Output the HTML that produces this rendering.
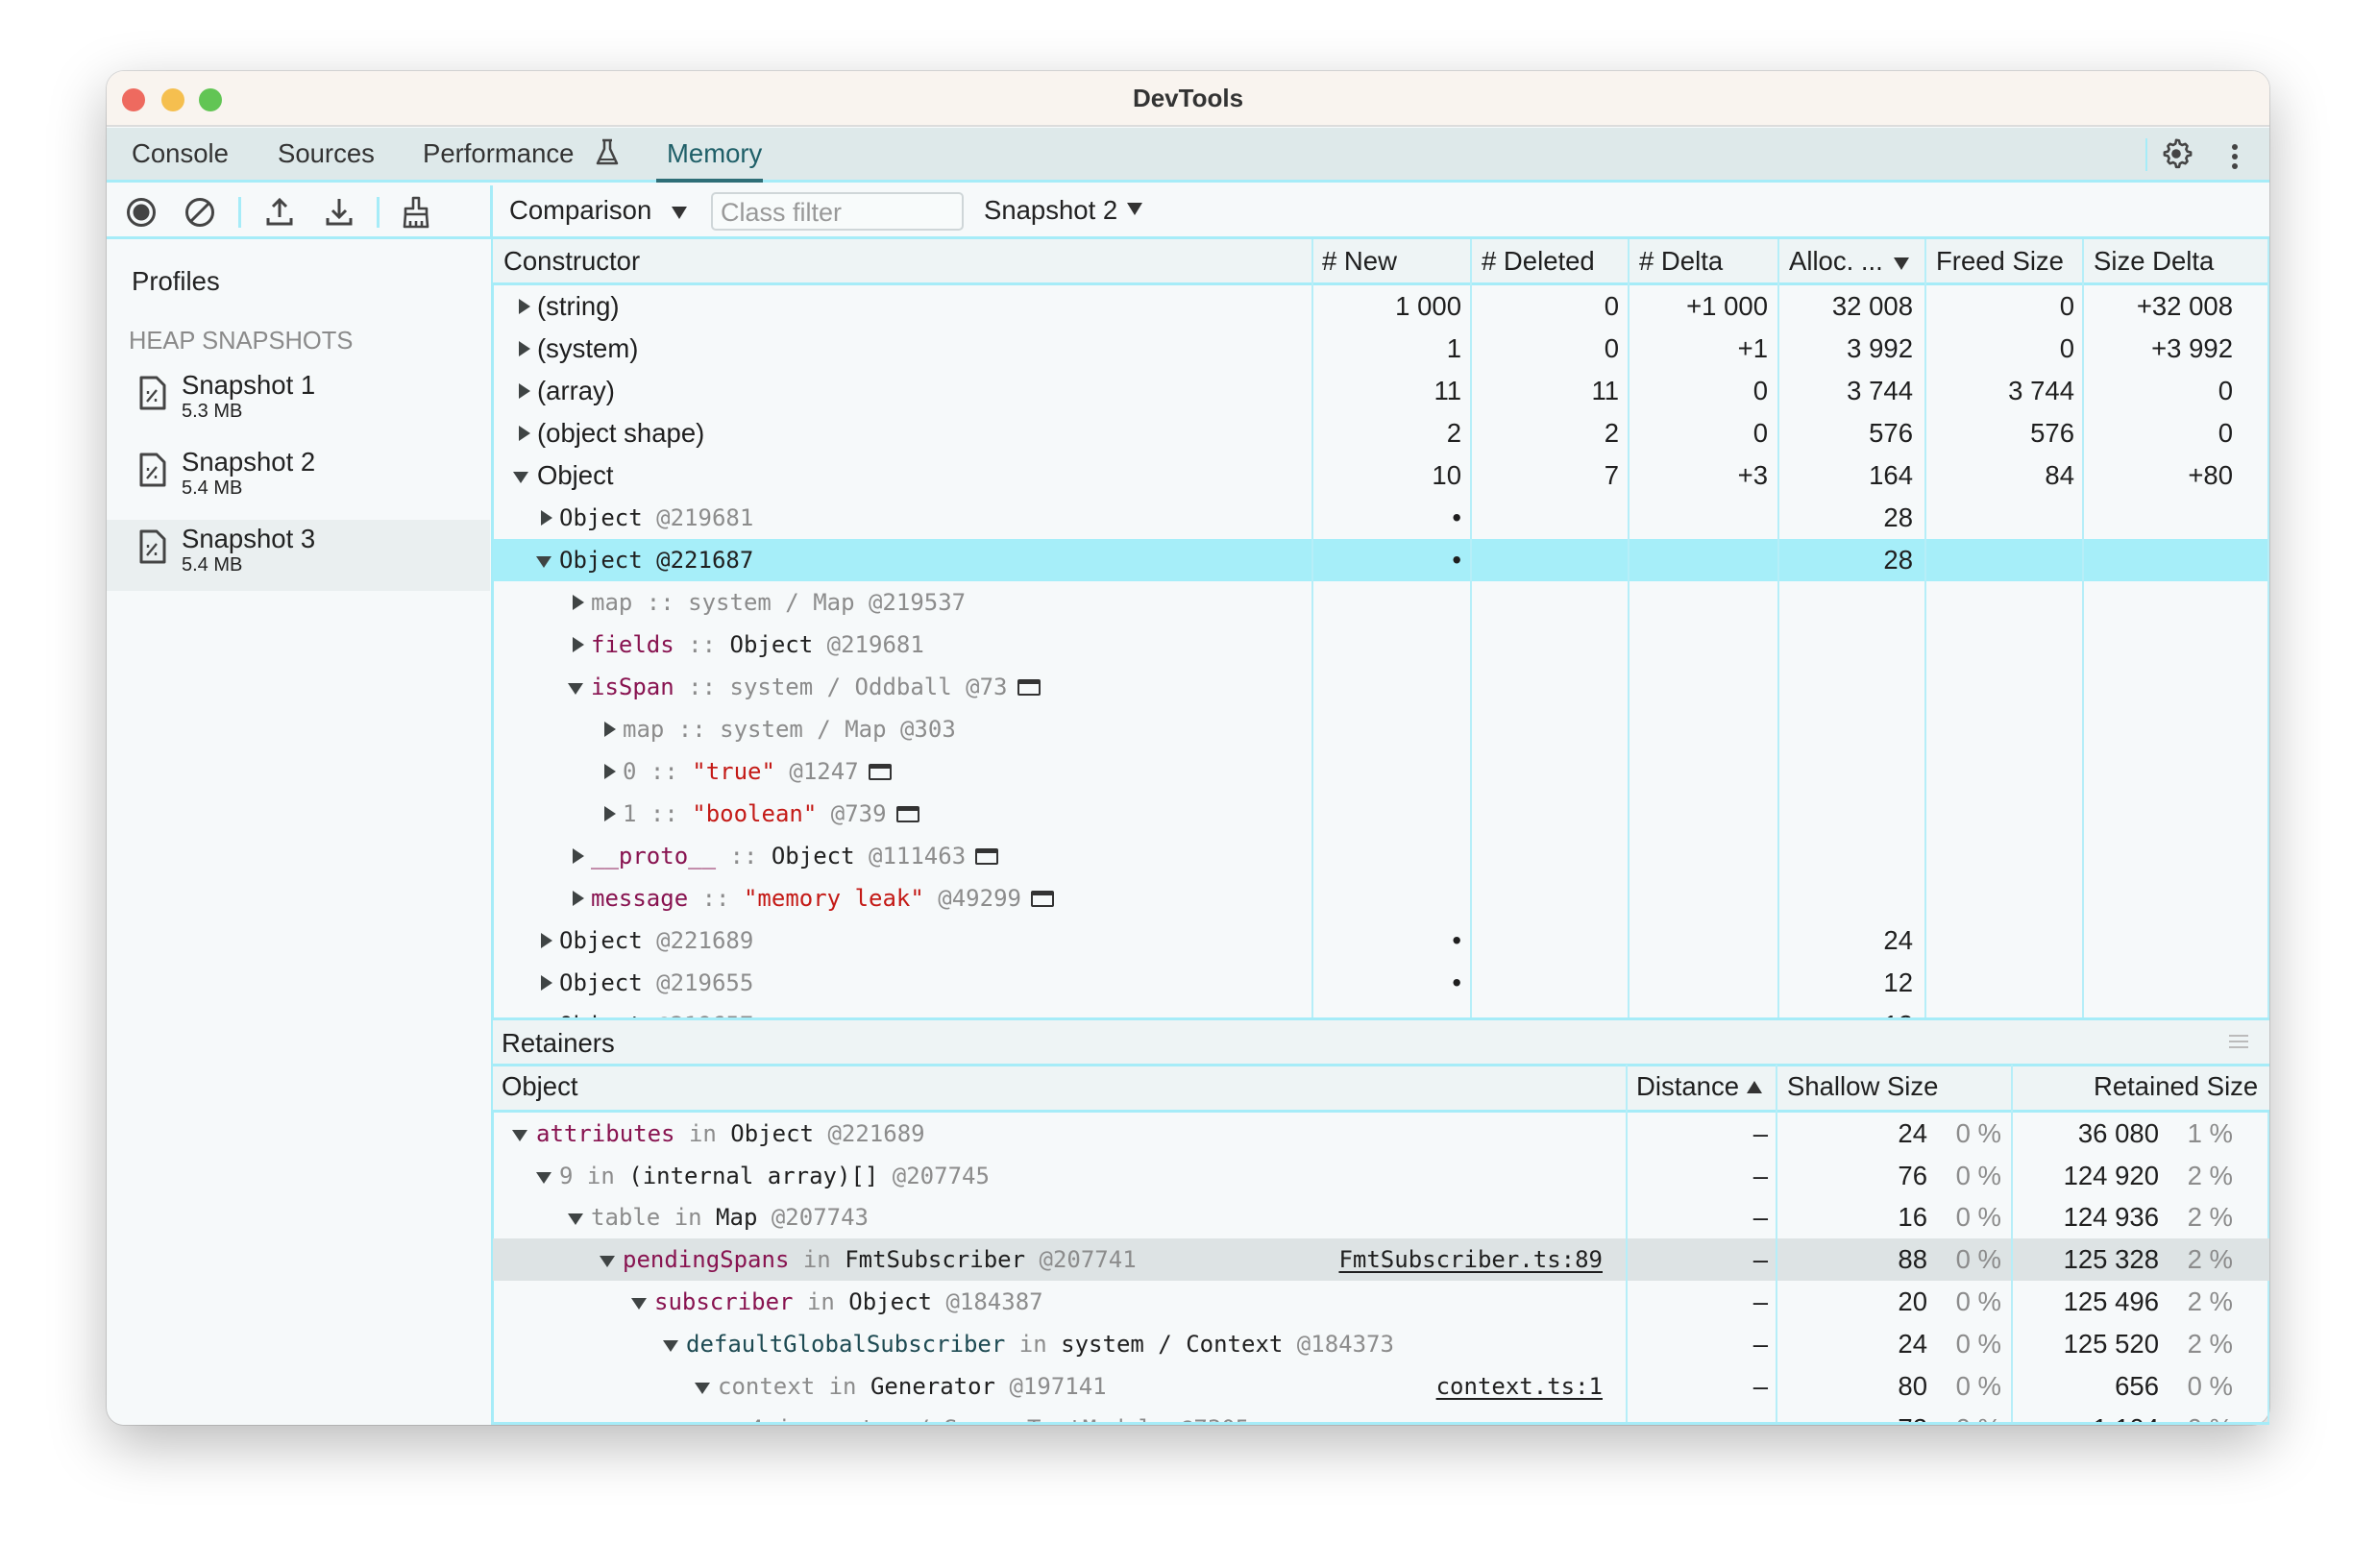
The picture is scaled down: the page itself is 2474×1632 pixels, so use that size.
<!DOCTYPE html>
<html><head><meta charset="utf-8"><style>
*{box-sizing:border-box;margin:0;padding:0}
body{width:2474px;height:1632px;background:#fff;position:relative;overflow:hidden;font-family:"Liberation Sans",sans-serif;color:#1f1f1f;font-size:27.5px}
.a{position:absolute}
#win{left:111px;top:74px;width:2251px;height:1409px;border-radius:18px;overflow:hidden;background:#f6f9fa;box-shadow:0 20px 60px rgba(0,0,0,.28),0 0 0 1px rgba(0,0,0,.12)}
.m{font-family:"DejaVu Sans Mono","Liberation Mono",monospace;font-size:24px}
.g{color:#8c8c8c}.p{color:#881350}.s{color:#c41a16}.t{color:#1d4a52}
.row{position:absolute;left:0;width:1849px;height:44px;line-height:44px;white-space:nowrap}
.n{position:absolute;top:0}
.tri{position:absolute;width:0;height:0}
.tr{border-top:8px solid transparent;border-bottom:8px solid transparent;border-left:12px solid #3f4444;top:14px}
.td{border-left:8px solid transparent;border-right:8px solid transparent;border-top:12px solid #3f4444;top:18px}
.box{display:inline-block;width:24px;height:17px;border:2.5px solid #333;border-top-width:5px;border-radius:2px;vertical-align:-1px;margin-left:10px}
.vl{position:absolute;width:2px;background:#b6eef8}
.hl{position:absolute;height:3px;background:#a6ecf8}
u{text-decoration:underline;text-underline-offset:4px}
</style></head><body>
<div id="win" class="a">
 <div class="a" style="left:0;top:0;width:2251px;height:58px;background:#f9f4ef;border-bottom:2px solid #dcdcdc"></div>
 <div class="a" style="left:16px;top:18px;width:24px;height:24px;border-radius:50%;background:#ee6a5f"></div>
 <div class="a" style="left:57px;top:18px;width:24px;height:24px;border-radius:50%;background:#f5bf4f"></div>
 <div class="a" style="left:96px;top:18px;width:24px;height:24px;border-radius:50%;background:#62c554"></div>
 <div class="a" style="left:0;top:13px;width:2251px;text-align:center;font-weight:bold;font-size:26px;color:#333">DevTools</div>
 <div class="a" style="left:0;top:59px;width:2251px;height:57px;background:#dee9ea;border-bottom:3px solid #a6ecf8"></div>
 <div class="a" style="left:26px;top:70px;color:#333">Console</div>
 <div class="a" style="left:178px;top:70px;color:#333">Sources</div>
 <div class="a" style="left:329px;top:70px;color:#333">Performance</div>
 <svg class="a" style="left:508px;top:70px" width="26" height="30" viewBox="0 0 26 30"><path d="M8 2h10M10 2v9L3 26h20L16 11V2" fill="none" stroke="#444" stroke-width="2.5" stroke-linejoin="round"/><path d="M5 22h16" stroke="#444" stroke-width="2"/></svg>
 <div class="a" style="left:583px;top:70px;color:#1f5f68">Memory</div>
 <div class="a" style="left:572px;top:112px;width:111px;height:4px;background:#2e6e77"></div>
 <div class="a" style="left:2122px;top:70px;width:2px;height:34px;background:#a6ecf8"></div>
 <svg class="a" style="left:2136px;top:68px" width="36" height="36" viewBox="0 0 24 24"><path d="M12 2.5l2 .3.5 2.3 1.6.9 2.2-.8 1.4 1.5-.8 2.2.9 1.6 2.3.5v2l-2.3.5-.9 1.6.8 2.2-1.4 1.5-2.2-.8-1.6.9-.5 2.3h-2l-.5-2.3-1.6-.9-2.2.8-1.4-1.5.8-2.2-.9-1.6-2.3-.5v-2l2.3-.5.9-1.6-.8-2.2 1.4-1.5 2.2.8 1.6-.9.5-2.3z" fill="none" stroke="#444" stroke-width="1.7" stroke-linejoin="round"/><circle cx="12" cy="12" r="3.2" fill="#444"/></svg>
 <div class="a" style="left:2212px;top:76px;width:6px;height:6px;border-radius:50%;background:#444;box-shadow:0 10px 0 #444,0 20px 0 #444"></div>
 <div class="a" style="left:0;top:119px;width:2251px;height:56px;border-bottom:3px solid #a6ecf8"></div>
 <div class="a" style="left:399px;top:119px;width:3px;height:56px;background:#a6ecf8"></div>
 <svg class="a" style="left:20px;top:131px" width="32" height="32"><circle cx="16" cy="16" r="13.5" fill="none" stroke="#444" stroke-width="3"/><circle cx="16" cy="16" r="8.5" fill="#444"/></svg>
 <svg class="a" style="left:81px;top:131px" width="32" height="32"><circle cx="16" cy="16" r="13.5" fill="none" stroke="#444" stroke-width="3"/><path d="M7 25L25 7" stroke="#444" stroke-width="3"/></svg>
 <div class="a" style="left:137px;top:131px;width:3px;height:32px;background:#a6ecf8"></div>
 <svg class="a" style="left:165px;top:131px" width="30" height="32"><path d="M15 3v18M8 10l7-7 7 7M3 22v6h24v-6" fill="none" stroke="#444" stroke-width="3"/></svg>
 <svg class="a" style="left:227px;top:131px" width="30" height="32"><path d="M15 2v19M8 14l7 7 7-7M3 22v6h24v-6" fill="none" stroke="#444" stroke-width="3"/></svg>
 <div class="a" style="left:281px;top:131px;width:3px;height:32px;background:#a6ecf8"></div>
 <svg class="a" style="left:306px;top:129px" width="32" height="36"><path d="M13 3h6v11h8v6H5v-6h8z M5 20l-1 13h24l-1-13 M10 27v6M16 27v6M22 27v6" fill="none" stroke="#444" stroke-width="2.6" stroke-linejoin="round"/></svg>
 <div class="a" style="left:419px;top:129px;color:#222">Comparison</div>
 <div class="a" style="left:588px;top:141px;border-left:8px solid transparent;border-right:8px solid transparent;border-top:13px solid #333"></div>
 <div class="a" style="left:629px;top:126px;width:263px;height:40px;border:2px solid #cfd6d8;border-radius:5px;background:#f8fbfb;color:#999;padding:4px 8px;font-size:27px;line-height:30px">Class filter</div>
 <div class="a" style="left:913px;top:129px;color:#222">Snapshot 2</div>
 <div class="a" style="left:1062px;top:137px;border-left:8px solid transparent;border-right:8px solid transparent;border-top:13px solid #333"></div>
 <div class="a" style="left:26px;top:203px;color:#222">Profiles</div>
 <div class="a" style="left:23px;top:267px;color:#8a8a8a;font-size:25.5px">HEAP SNAPSHOTS</div>
 <div class="a" style="left:0;top:467px;width:399px;height:74px;background:#eaeff0"></div>
 <svg class="a" style="left:33px;top:316px" width="30" height="38"><path d="M3 3h16l8 8v24H3z" fill="none" stroke="#444" stroke-width="3" stroke-linejoin="round"/><path d="M9 28l10-12M10 17v3M18 25v3" stroke="#444" stroke-width="2.4"/></svg>
 <div class="a" style="left:78px;top:311px;color:#222">Snapshot 1</div>
 <div class="a" style="left:78px;top:343px;color:#222;font-size:20px">5.3 MB</div>
 <svg class="a" style="left:33px;top:396px" width="30" height="38"><path d="M3 3h16l8 8v24H3z" fill="none" stroke="#444" stroke-width="3" stroke-linejoin="round"/><path d="M9 28l10-12M10 17v3M18 25v3" stroke="#444" stroke-width="2.4"/></svg>
 <div class="a" style="left:78px;top:391px;color:#222">Snapshot 2</div>
 <div class="a" style="left:78px;top:423px;color:#222;font-size:20px">5.4 MB</div>
 <svg class="a" style="left:33px;top:476px" width="30" height="38"><path d="M3 3h16l8 8v24H3z" fill="none" stroke="#444" stroke-width="3" stroke-linejoin="round"/><path d="M9 28l10-12M10 17v3M18 25v3" stroke="#444" stroke-width="2.4"/></svg>
 <div class="a" style="left:78px;top:471px;color:#222">Snapshot 3</div>
 <div class="a" style="left:78px;top:503px;color:#222;font-size:20px">5.4 MB</div>
 <div class="a" style="left:400px;top:175px;width:3px;height:1234px;background:#a6ecf8"></div>
</div>

<div class="a" style="left:513px;top:249px;width:1849px;height:48px;background:#eef4f5;border-bottom:3px solid #a6ecf8"></div>
<div class="a" style="left:524px;top:256px">Constructor</div>
<div class="a" style="left:1376px;top:256px"># New</div>
<div class="a" style="left:1542px;top:256px"># Deleted</div>
<div class="a" style="left:1706px;top:256px"># Delta</div>
<div class="a" style="left:1862px;top:256px">Alloc. ...</div>
<div class="a" style="left:1971px;top:268px;border-left:8px solid transparent;border-right:8px solid transparent;border-top:13px solid #333"></div>
<div class="a" style="left:2015px;top:256px">Freed Size</div>
<div class="a" style="left:2179px;top:256px">Size Delta</div>

<div class="a" style="left:513px;top:297px;width:1849px;height:763px;overflow:hidden">
 <div class="row" style="top:264px;background:#a6eef9"></div>
 <div class="row" style="top:0"><div class="tri tr" style="left:27px"></div><span class="n" style="left:46px">(string)</span><span class="n" style="right:841px">1 000</span><span class="n" style="right:677px">0</span><span class="n" style="right:522px">+1 000</span><span class="n" style="right:371px">32 008</span><span class="n" style="right:203px">0</span><span class="n" style="right:38px">+32 008</span></div>
 <div class="row" style="top:44px"><div class="tri tr" style="left:27px"></div><span class="n" style="left:46px">(system)</span><span class="n" style="right:841px">1</span><span class="n" style="right:677px">0</span><span class="n" style="right:522px">+1</span><span class="n" style="right:371px">3 992</span><span class="n" style="right:203px">0</span><span class="n" style="right:38px">+3 992</span></div>
 <div class="row" style="top:88px"><div class="tri tr" style="left:27px"></div><span class="n" style="left:46px">(array)</span><span class="n" style="right:841px">11</span><span class="n" style="right:677px">11</span><span class="n" style="right:522px">0</span><span class="n" style="right:371px">3 744</span><span class="n" style="right:203px">3 744</span><span class="n" style="right:38px">0</span></div>
 <div class="row" style="top:132px"><div class="tri tr" style="left:27px"></div><span class="n" style="left:46px">(object shape)</span><span class="n" style="right:841px">2</span><span class="n" style="right:677px">2</span><span class="n" style="right:522px">0</span><span class="n" style="right:371px">576</span><span class="n" style="right:203px">576</span><span class="n" style="right:38px">0</span></div>
 <div class="row" style="top:176px"><div class="tri td" style="left:21px"></div><span class="n" style="left:46px">Object</span><span class="n" style="right:841px">10</span><span class="n" style="right:677px">7</span><span class="n" style="right:522px">+3</span><span class="n" style="right:371px">164</span><span class="n" style="right:203px">84</span><span class="n" style="right:38px">+80</span></div>
 <div class="row" style="top:220px"><div class="tri tr" style="left:50px"></div><span class="n m" style="left:69px">Object <span class="g">@219681</span></span><span class="n" style="right:841px">•</span><span class="n" style="right:371px">28</span></div>
 <div class="row" style="top:264px"><div class="tri td" style="left:45px"></div><span class="n m" style="left:69px">Object @221687</span><span class="n" style="right:841px">•</span><span class="n" style="right:371px">28</span></div>
 <div class="row" style="top:308px"><div class="tri tr" style="left:83px"></div><span class="n m g" style="left:102px">map :: system / Map @219537</span></div>
 <div class="row" style="top:352px"><div class="tri tr" style="left:83px"></div><span class="n m" style="left:102px"><span class="p">fields</span> <span class="g">::</span> Object <span class="g">@219681</span></span></div>
 <div class="row" style="top:396px"><div class="tri td" style="left:78px"></div><span class="n m" style="left:102px"><span class="p">isSpan</span> <span class="g">:: system / Oddball @73</span><span class="box"></span></span></div>
 <div class="row" style="top:440px"><div class="tri tr" style="left:116px"></div><span class="n m g" style="left:135px">map :: system / Map @303</span></div>
 <div class="row" style="top:484px"><div class="tri tr" style="left:116px"></div><span class="n m" style="left:135px"><span class="g">0 ::</span> <span class="s">"true"</span> <span class="g">@1247</span><span class="box"></span></span></div>
 <div class="row" style="top:528px"><div class="tri tr" style="left:116px"></div><span class="n m" style="left:135px"><span class="g">1 ::</span> <span class="s">"boolean"</span> <span class="g">@739</span><span class="box"></span></span></div>
 <div class="row" style="top:572px"><div class="tri tr" style="left:83px"></div><span class="n m" style="left:102px"><span class="p">__proto__</span> <span class="g">::</span> Object <span class="g">@111463</span><span class="box"></span></span></div>
 <div class="row" style="top:616px"><div class="tri tr" style="left:83px"></div><span class="n m" style="left:102px"><span class="p">message</span> <span class="g">::</span> <span class="s">"memory leak"</span> <span class="g">@49299</span><span class="box"></span></span></div>
 <div class="row" style="top:660px"><div class="tri tr" style="left:50px"></div><span class="n m" style="left:69px">Object <span class="g">@221689</span></span><span class="n" style="right:841px">•</span><span class="n" style="right:371px">24</span></div>
 <div class="row" style="top:704px"><div class="tri tr" style="left:50px"></div><span class="n m" style="left:69px">Object <span class="g">@219655</span></span><span class="n" style="right:841px">•</span><span class="n" style="right:371px">12</span></div>
 <div class="row" style="top:748px"><div class="tri tr" style="left:50px"></div><span class="n m" style="left:69px">Object <span class="g">@219657</span></span><span class="n" style="right:371px">12</span></div>
</div>
<div class="vl" style="left:1365px;top:249px;height:811px"></div>
<div class="vl" style="left:1530px;top:249px;height:811px"></div>
<div class="vl" style="left:1694px;top:249px;height:811px"></div>
<div class="vl" style="left:1850px;top:249px;height:811px"></div>
<div class="vl" style="left:2003px;top:249px;height:811px"></div>
<div class="vl" style="left:2167px;top:249px;height:811px"></div>
<div class="vl" style="left:2360px;top:249px;height:1234px;width:2px"></div>

<div class="a" style="left:513px;top:1059px;width:1849px;height:98px;background:#eef4f5;border-top:3px solid #a6ecf8"></div>
<div class="hl" style="left:513px;top:1107px;width:1849px"></div>
<div class="hl" style="left:513px;top:1155px;width:1849px"></div>
<div class="a" style="left:522px;top:1070px">Retainers</div>
<div class="a" style="left:2320px;top:1077px;width:20px;height:2px;background:#bbb;box-shadow:0 6px 0 #bbb,0 12px 0 #bbb"></div>
<div class="a" style="left:522px;top:1115px">Object</div>
<div class="a" style="left:1703px;top:1115px">Distance</div>
<div class="a" style="left:1818px;top:1125px;border-left:8px solid transparent;border-right:8px solid transparent;border-bottom:13px solid #333"></div>
<div class="a" style="left:1860px;top:1115px">Shallow Size</div>
<div class="a" style="left:2179px;top:1115px">Retained Size</div>

<div class="a" style="left:513px;top:1158px;width:1849px;height:325px;overflow:hidden">
 <div class="row" style="top:131px;background:#dde3e4"></div>
 <div class="row" style="top:0"><div class="tri td" style="left:20px"></div><span class="n m" style="left:45px"><span class="p">attributes</span> <span class="g">in</span> Object <span class="g">@221689</span></span><span class="n" style="right:522px">–</span><span class="n" style="right:356px">24</span><span class="n g" style="right:279px">0 %</span><span class="n" style="right:115px">36 080</span><span class="n g" style="right:38px">1 %</span></div>
 <div class="row" style="top:44px"><div class="tri td" style="left:45px"></div><span class="n m" style="left:69px"><span class="g">9 in</span> (internal array)[] <span class="g">@207745</span></span><span class="n" style="right:522px">–</span><span class="n" style="right:356px">76</span><span class="n g" style="right:279px">0 %</span><span class="n" style="right:115px">124 920</span><span class="n g" style="right:38px">2 %</span></div>
 <div class="row" style="top:87px"><div class="tri td" style="left:78px"></div><span class="n m" style="left:102px"><span class="g">table in</span> Map <span class="g">@207743</span></span><span class="n" style="right:522px">–</span><span class="n" style="right:356px">16</span><span class="n g" style="right:279px">0 %</span><span class="n" style="right:115px">124 936</span><span class="n g" style="right:38px">2 %</span></div>
 <div class="row" style="top:131px"><div class="tri td" style="left:111px"></div><span class="n m" style="left:135px"><span class="p">pendingSpans</span> <span class="g">in</span> FmtSubscriber <span class="g">@207741</span></span><span class="n m" style="right:694px"><u>FmtSubscriber.ts:89</u></span><span class="n" style="right:522px">–</span><span class="n" style="right:356px">88</span><span class="n g" style="right:279px">0 %</span><span class="n" style="right:115px">125 328</span><span class="n g" style="right:38px">2 %</span></div>
 <div class="row" style="top:175px"><div class="tri td" style="left:144px"></div><span class="n m" style="left:168px"><span class="p">subscriber</span> <span class="g">in</span> Object <span class="g">@184387</span></span><span class="n" style="right:522px">–</span><span class="n" style="right:356px">20</span><span class="n g" style="right:279px">0 %</span><span class="n" style="right:115px">125 496</span><span class="n g" style="right:38px">2 %</span></div>
 <div class="row" style="top:219px"><div class="tri td" style="left:177px"></div><span class="n m" style="left:201px"><span class="t">defaultGlobalSubscriber</span> <span class="g">in</span> system / Context <span class="g">@184373</span></span><span class="n" style="right:522px">–</span><span class="n" style="right:356px">24</span><span class="n g" style="right:279px">0 %</span><span class="n" style="right:115px">125 520</span><span class="n g" style="right:38px">2 %</span></div>
 <div class="row" style="top:263px"><div class="tri td" style="left:210px"></div><span class="n m" style="left:234px"><span class="g">context</span> <span class="g">in</span> Generator <span class="g">@197141</span></span><span class="n m" style="right:694px"><u>context.ts:1</u></span><span class="n" style="right:522px">–</span><span class="n" style="right:356px">80</span><span class="n g" style="right:279px">0 %</span><span class="n" style="right:115px">656</span><span class="n g" style="right:38px">0 %</span></div>
 <div class="row" style="top:307px"><span class="n m g" style="left:267px">4 in system / SourceTextModule @7305</span><span class="n" style="right:356px">72</span><span class="n g" style="right:279px">0 %</span><span class="n" style="right:115px">1 104</span><span class="n g" style="right:38px">0 %</span></div>
</div>
<div class="vl" style="left:1692px;top:1108px;height:375px"></div>
<div class="vl" style="left:1848px;top:1108px;height:375px"></div>
<div class="vl" style="left:2093px;top:1108px;height:375px"></div>
<div class="hl" style="left:513px;top:1480px;width:1849px"></div>
</body></html>
